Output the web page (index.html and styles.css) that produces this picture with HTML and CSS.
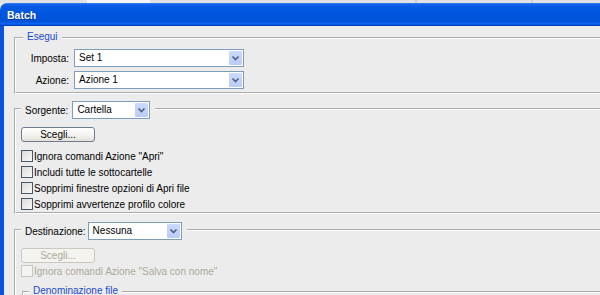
FILE: index.html
```html
<!DOCTYPE html>
<html>
<head>
<meta charset="utf-8">
<title>Batch</title>
<link rel="stylesheet" href="styles.css">
</head>
<body>
<div class="desk"></div>
<div class="win">
  <div class="titlebar"><span class="title">Batch</span></div>
  <div class="frame">
    <div class="client">
      <fieldset class="group g1">
        <legend class="legend-text">Esegui</legend>
        <div class="form-grid">
          <label class="lbl">Imposta:</label>
          <div class="combo w170"><span class="combo-val">Set 1</span><span class="combo-btn"><svg width="13" height="14" viewBox="0 0 13 14"><path d="M3.5 5.5 L6.5 8.5 L9.5 5.5" fill="none" stroke="#4d6185" stroke-width="1.7"/></svg></span></div>
          <label class="lbl">Azione:</label>
          <div class="combo w170"><span class="combo-val">Azione 1</span><span class="combo-btn"><svg width="13" height="14" viewBox="0 0 13 14"><path d="M3.5 5.5 L6.5 8.5 L9.5 5.5" fill="none" stroke="#4d6185" stroke-width="1.7"/></svg></span></div>
        </div>
      </fieldset>

      <fieldset class="group g2">
        <legend class="legend-ctl"><span class="legend-lbl">Sorgente:</span><span class="combo w78"><span class="combo-val">Cartella</span><span class="combo-btn"><svg width="13" height="14" viewBox="0 0 13 14"><path d="M3.5 5.5 L6.5 8.5 L9.5 5.5" fill="none" stroke="#4d6185" stroke-width="1.7"/></svg></span></span></legend>
        <button class="btn">Scegli...</button>
        <div class="checks">
          <div class="check"><span class="box"></span><span class="ctext">Ignora comandi Azione "Apri"</span></div>
          <div class="check"><span class="box"></span><span class="ctext">Includi tutte le sottocartelle</span></div>
          <div class="check"><span class="box"></span><span class="ctext">Sopprimi finestre opzioni di Apri file</span></div>
          <div class="check"><span class="box"></span><span class="ctext">Sopprimi avvertenze profilo colore</span></div>
        </div>
      </fieldset>

      <fieldset class="group g3">
        <legend class="legend-ctl tight"><span class="legend-lbl">Destinazione:</span><span class="combo w94"><span class="combo-val">Nessuna</span><span class="combo-btn"><svg width="13" height="14" viewBox="0 0 13 14"><path d="M3.5 5.5 L6.5 8.5 L9.5 5.5" fill="none" stroke="#4d6185" stroke-width="1.7"/></svg></span></span></legend>
        <button class="btn disabled" disabled>Scegli...</button>
        <div class="check disabled"><span class="box"></span><span class="ctext">Ignora comandi Azione "Salva con nome"</span></div>
        <fieldset class="group inner">
          <legend class="legend-text">Denominazione file</legend>
          <div class="inner-body"></div>
        </fieldset>
      </fieldset>
    </div>
  </div>
</div>
</body>
</html>
```
FILE: styles.css
```css
* { box-sizing: border-box; }
html, body { margin: 0; padding: 0; }
body {
  width: 600px;
  height: 295px;
  overflow: hidden;
  background: #ececec;
  font-family: "Liberation Sans", Arial, sans-serif;
  font-size: 10px;
  color: #000;
}
.desk {
  height: 3px;
  background: linear-gradient(90deg, #e2e2e2 0 87px, #f6f6f6 87px 150px, #e2e2e2 150px 415px, #cfcfcf 415px 417px, #e2e2e2 417px 531px, #cfcfcf 531px 533px, #e2e2e2 533px);
}
.titlebar {
  height: 23px;
  border-radius: 7px 0 0 0;
  background: linear-gradient(#3b86f6 0, #1667ef 1px, #0a5be6 3px, #0057e0 8px, #0054dc 15px, #0052da 19px, #0b63ef 20px, #0a66f4 21px, #0048cc 22px, #003fb8 23px);
  padding-left: 7px;
  display: flex;
  align-items: center;
}
.title {
  color: #fff;
  font-weight: bold;
  font-size: 10.5px;
  line-height: 12px;
  padding-top: 1px;
  text-shadow: 1px 1px 0 #0a3a9c;
}
.frame {
  border-left: 4px solid #0a53da;
  box-shadow: inset 1px 0 0 #0844b8;
}
.client {
  background: #ececec;
  height: 269px;
  padding: 4px 0 0 10px;
  overflow: hidden;
}
.group {
  border: 2px groove #ffffff;
  margin: 0;
  min-width: 0;
  width: 700px;
  padding: 0;
}
.legend-text {
  padding: 0 4px 3px;
  line-height: 13px;
  color: #1a4bd0;
}
.g1 { padding: 3px 0 3px 7px; }
.form-grid {
  display: grid;
  grid-template-columns: 46px 170px;
  grid-auto-rows: 18px;
  column-gap: 5px;
  row-gap: 4px;
  align-items: center;
}
.lbl { justify-self: end; line-height: 13px; }
.combo {
  display: flex;
  height: 18px;
  border: 1px solid #7f9db9;
  background: #fff;
  padding: 1px;
}
.w170 { width: 170px; }
.w78 { width: 78px; }
.w94 { width: 94px; }
.combo-val {
  flex: 1;
  padding-left: 3px;
  line-height: 14px;
  white-space: nowrap;
}
.combo-btn {
  width: 13px;
  height: 14px;
  background: linear-gradient(#cbdafd, #b9cbf7);
  border-radius: 1px;
  display: flex;
}
.legend-ctl {
  display: flex;
  align-items: center;
  gap: 4px;
  padding: 3px 5px 0 4px;
}
.legend-ctl.tight { gap: 2px; }
.legend-lbl { line-height: 13px; }
.g2 { margin-top: 4px; padding: 8px 0 0 5px; }
.g3 { margin-top: 5px; padding: 8px 0 0 5px; }
.btn {
  display: block;
  width: 74px;
  height: 15px;
  padding: 0;
  border: 1px solid #6f7c8d;
  border-radius: 3px;
  background: linear-gradient(#ffffff, #f2f1ec 60%, #e2e1db);
  font: inherit;
  line-height: 13px;
  color: #000;
  text-align: center;
}
.btn.disabled {
  border-color: #cac9bf;
  background: #f4f3ef;
  color: #aca899;
}
.checks { margin-top: 6px; }
.check {
  display: flex;
  align-items: center;
  height: 16px;
}
.box {
  width: 12px;
  height: 12px;
  margin-right: 1px;
  border: 1px solid #47576c;
  background: linear-gradient(135deg, #dcdcd6, #f8f8f6);
  flex: none;
}
.ctext { line-height: 13px; white-space: nowrap; }
.check.disabled .box {
  border-color: #c9c7bc;
  background: #f4f4f1;
}
.check.disabled .ctext { color: #aca899; }
.inner {
  margin: 5px 0 0 1px;
  padding: 0 0 0 5px;
}
.inner-body { height: 20px; }
```
